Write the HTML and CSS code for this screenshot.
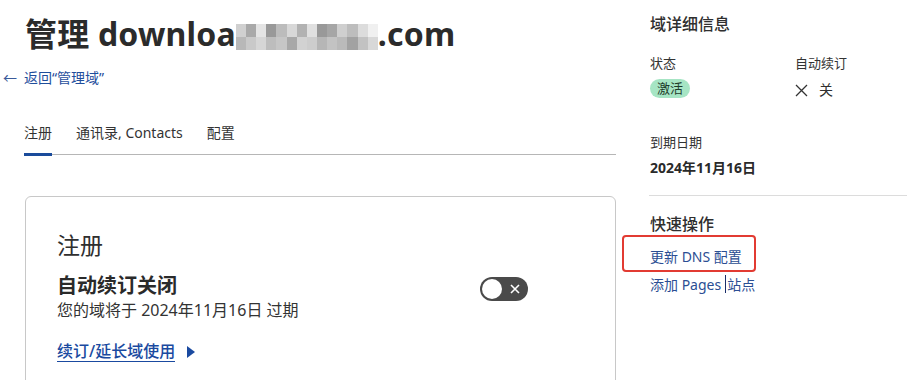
FILE: index.html
```html
<!DOCTYPE html>
<html lang="zh">
<head>
<meta charset="utf-8">
<link rel="stylesheet" href="styles.css">
</head>
<body>
<div class="page">
  <main class="main">
    <h1 class="title">管理 downloa<span class="blur"><i class="c1"></i><i class="c2"></i><i class="c3"></i><i class="c4"></i><i class="c5"></i><i class="c6"></i><i class="c7"></i><i class="c8"></i><i class="c9"></i><i class="c10"></i><i class="c11"></i><i class="c12"></i><i class="c13"></i><i class="c14"></i></span>.com</h1>
    <a class="back" href="#"><span class="arrow">←</span>返回“管理域”</a>
    <nav class="tabs">
      <span class="tab active">注册</span>
      <span class="tab">通讯录, Contacts</span>
      <span class="tab">配置</span>
    </nav>
    <section class="card">
      <h2 class="card-title">注册</h2>
      <div class="renew-row">
        <div class="renew-text">
          <div class="renew-head">自动续订关闭</div>
          <div class="renew-sub">您的域将于 2024年11月16日 过期</div>
        </div>
        <span class="toggle"><span class="knob"></span><svg class="tx" width="10" height="10" viewBox="0 0 10 10"><path d="M1 1L9 9M9 1L1 9" stroke="#fff" stroke-width="1.6" fill="none"/></svg></span>
      </div>
      <a class="extend" href="#"><span class="extend-text">续订/延长域使用</span><span class="tri"></span></a>
    </section>
  </main>
  <aside class="side">
    <h3 class="side-title">域详细信息</h3>
    <div class="grid2">
      <div>
        <div class="label">状态</div>
        <span class="badge">激活</span>
      </div>
      <div>
        <div class="label">自动续订</div>
        <div class="off"><svg class="xicon" width="13" height="13" viewBox="0 0 13 13"><path d="M1 1L12 12M12 1L1 12" stroke="#333" stroke-width="1.3" fill="none"/></svg><span>关</span></div>
      </div>
    </div>
    <div class="label exp-label">到期日期</div>
    <div class="exp">2024年11月16日</div>
    <hr class="sep">
    <h3 class="side-title quick">快速操作</h3>
    <div class="hl"><a class="qlink" href="#">更新 DNS 配置</a></div>
    <a class="qlink second" href="#">添加 Pages<span class="caret"></span>站点</a>
  </aside>
</div>
</body>
</html>
```
FILE: styles.css
```css
* { box-sizing: border-box; }
body {
  margin: 0;
  background: #fff;
  font-family: "Noto Sans", "Noto Sans CJK SC", sans-serif;
  color: #313131;
}
a { text-decoration: none; }
.page {
  display: flex;
  width: 907px;
  height: 380px;
  overflow: hidden;
}
.main {
  width: 616px;
  padding-left: 24px;
  flex: none;
}
.title {
  margin: 12px 0 0 1px;
  font-size: 32px;
  font-weight: 700;
  line-height: 44px;
  color: #2b2b2b;
  white-space: nowrap;
  letter-spacing: 0.2px;
}
.blur {
  display: inline-flex;
  vertical-align: -4px;
  height: 26px;
  width: 142px;
}
.blur i { flex: 1; display: block; }
.c1 { background: linear-gradient(#d0d0d0 50%, #b8b8b8 50%); }
.c2 { background: linear-gradient(#a9a9a9 50%, #c9c9c9 50%); }
.c3 { background: linear-gradient(#e4e4e4 50%, #d6d6d6 50%); }
.c4 { background: linear-gradient(#999 50%, #bdbdbd 50%); }
.c5 { background: linear-gradient(#bcbcbc 50%, #c6c6c6 50%); }
.c6 { background: linear-gradient(#d8d8d8 50%, #a8a8a8 50%); }
.c7 { background: linear-gradient(#b2b2b2 50%, #d2d2d2 50%); }
.c8 { background: linear-gradient(#e0e0e0 50%, #cdcdcd 50%); }
.c9 { background: linear-gradient(#999 50%, #b6b6b6 50%); }
.c10 { background: linear-gradient(#a6a6a6 50%, #c3c3c3 50%); }
.c11 { background: linear-gradient(#cfcfcf 50%, #bababa 50%); }
.c12 { background: linear-gradient(#bdbdbd 50%, #a2a2a2 50%); }
.c13 { background: linear-gradient(#dcdcdc 50%, #c2c2c2 50%); }
.c14 { background: linear-gradient(#f0f0f0 50%, #d8d8d8 50%); }
.back {
  display: block;
  margin: 13px 0 0 -21px;
  font-size: 14px;
  line-height: 18px;
  color: #1f4e9c;
}
.arrow {
  display: inline-block;
  width: 21px;
  color: #3a5a9a;
}
.tabs {
  display: flex;
  gap: 24px;
  margin-top: 36px;
  border-bottom: 1px solid #b6b6b6;
  height: 32px;
  font-size: 14px;
}
.tab {
  color: #333;
  line-height: 20px;
  position: relative;
}
.tab.active::after {
  content: "";
  position: absolute;
  left: 0;
  right: 0;
  bottom: -2px;
  height: 3px;
  background: #1a4b9b;
}
.card {
  margin-top: 41px;
  margin-left: 1px;
  width: 591px;
  height: 220px;
  border: 1px solid #c8c8c8;
  border-radius: 6px;
  padding: 33px 31px;
}
.card-title {
  margin: 0;
  font-size: 23px;
  font-weight: 400;
  line-height: 30px;
  color: #2f2f2f;
}
.renew-row {
  display: flex;
  align-items: flex-start;
  margin-top: 13px;
}
.renew-text { width: 423px; }
.renew-head {
  font-size: 20px;
  font-weight: 700;
  line-height: 26px;
  color: #2a2a2a;
}
.renew-sub {
  font-size: 16px;
  line-height: 22px;
  color: #333;
}
.toggle {
  display: flex;
  align-items: center;
  width: 48px;
  height: 24px;
  margin-top: 4px;
  border-radius: 12px;
  background: #4a4a4a;
  padding: 2px;
}
.knob {
  width: 20px;
  height: 20px;
  border-radius: 50%;
  background: #fff;
}
.tx { margin-left: 8px; }
.extend {
  display: inline-flex;
  align-items: center;
  margin-top: 20px;
  color: #1a4aa0;
  font-size: 16px;
  font-weight: 500;
}
.extend-text {
  border-bottom: 1px solid #1a4aa0;
  line-height: 20px;
}
.tri {
  width: 0;
  height: 0;
  border-top: 6px solid transparent;
  border-bottom: 6px solid transparent;
  border-left: 8px solid #1a4aa0;
  margin-left: 12px;
}
.side {
  padding-left: 34px;
  flex: 1;
}
.side-title {
  margin: 13px 0 0;
  font-size: 16px;
  font-weight: 500;
  line-height: 22px;
  color: #2f2f2f;
}
.grid2 {
  display: grid;
  grid-template-columns: 145px 1fr;
  margin-top: 19px;
}
.label {
  font-size: 13px;
  line-height: 18px;
  color: #333;
}
.badge {
  display: inline-block;
  margin-top: 7px;
  padding: 0 7px;
  height: 19px;
  line-height: 19px;
  border-radius: 10px;
  background: #a6e5c4;
  color: #1e3b2a;
  font-size: 13px;
}
.off {
  display: flex;
  align-items: center;
  gap: 11px;
  margin-top: 8px;
  font-size: 14px;
  line-height: 20px;
  color: #2f2f2f;
}
.exp-label { margin-top: 33px; }
.exp {
  margin-top: 8px;
  font-size: 14px;
  font-weight: 700;
  line-height: 18px;
  color: #2a2a2a;
}
.sep {
  margin: 18px 0 0 -1px;
  border: 0;
  border-top: 1px solid #dcdcdc;
}
.quick { margin-top: 17px; }
.hl {
  margin: 0 0 0 -28px;
  width: 134px;
  height: 37px;
  border: 2px solid #e23b32;
  border-radius: 4px;
  padding: 10px 0 0 26px;
}
.qlink {
  display: block;
  font-size: 14px;
  line-height: 20px;
  color: #2b4e93;
  white-space: nowrap;
}
.second { margin-top: 3px; }
.caret {
  display: inline-block;
  width: 1px;
  height: 18px;
  background: #1a2e6a;
  vertical-align: -3px;
  margin: 0 1px 0 4px;
}
```
